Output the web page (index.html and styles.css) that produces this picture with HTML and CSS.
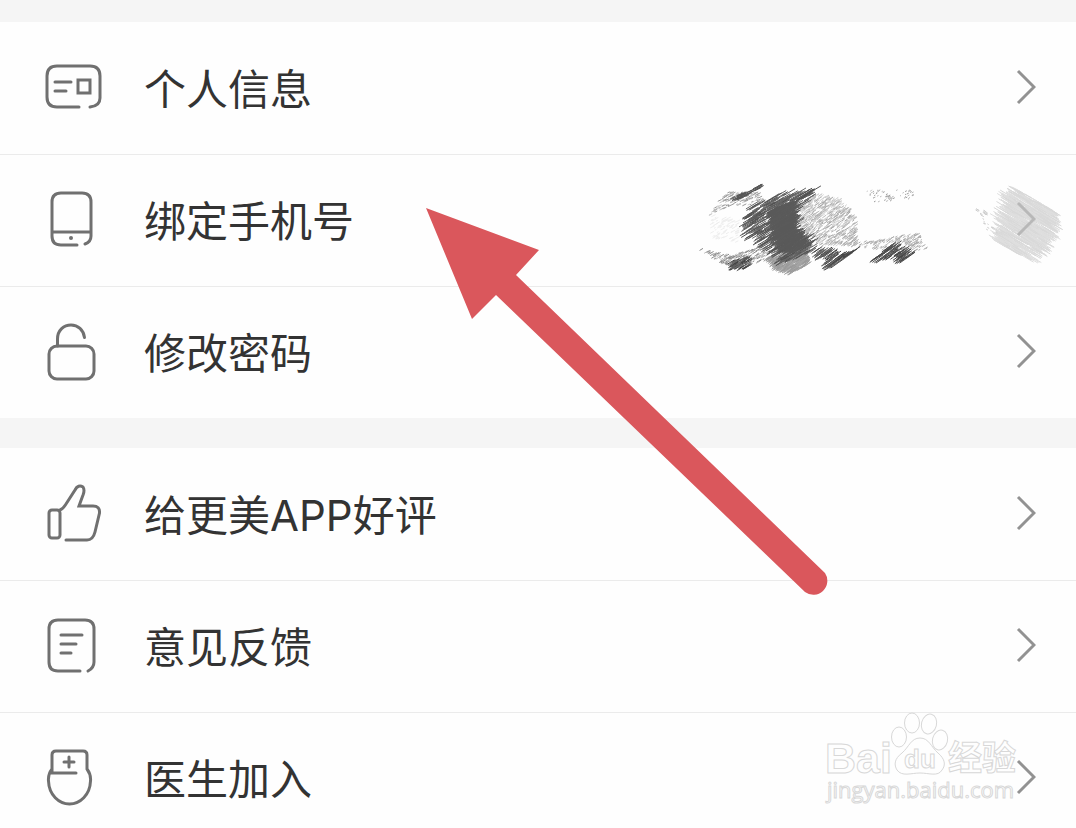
FILE: index.html
```html
<!DOCTYPE html>
<html lang="zh-CN">
<head>
    <meta charset="UTF-8">
    <meta name="viewport" content="width=device-width, initial-scale=1.0">
    <title>设置</title>
    <link rel="stylesheet" href="styles.css">
</head>
<body>
    <main class="settings">
        <nav class="group">
            <a class="row" href="#">
                <svg class="icon" viewBox="0 0 60 60">
                    <path d="M35 50H13Q3 50 3 40V19Q3 9 13 9H46Q56 9 56 19V41Q56 49 46 50M11 25H27M11 34H22"/>
                    <path d="M34 23H46V36H34Z"/>
                </svg>
                <span class="label">个人信息</span>
                <svg class="chevron" viewBox="0 0 20 36"><path d="M2 2L18 18L2 34"/></svg>
            </a>
            <a class="row" href="#">
                <svg class="icon" viewBox="0 0 60 60">
                    <path d="M33 56H17Q8 56 8 47V13Q8 4 17 4H38Q47 4 47 13V47Q47 53 41 55M8 43H47"/>
                    <circle class="dot" cx="27" cy="49" r="2"/>
                </svg>
                <span class="label">绑定手机号</span>
                <canvas class="scribble" id="scribble" width="386" height="116"></canvas>
                <svg class="chevron faded" viewBox="0 0 20 36"><path d="M2 2L18 18L2 34"/></svg>
            </a>
            <a class="row" href="#">
                <svg class="icon" viewBox="0 0 60 60">
                    <rect x="5" y="25" width="45" height="33" rx="8"/>
                    <path d="M13.500 25V18C13.500 9 20 4 27 4C34 4 39.500 9 40.500 16.500"/>
                </svg>
                <span class="label">修改密码</span>
                <svg class="chevron" viewBox="0 0 20 36"><path d="M2 2L18 18L2 34"/></svg>
            </a>
        </nav>
        <nav class="group">
            <a class="row" href="#">
                <svg class="icon" viewBox="0 0 60 60">
                    <rect x="5" y="27" width="11" height="28" rx="3"/>
                    <path d="M16 27C19 26 20 24 22 21L31 7C33 3 36 2 39 4C41 7 40 9 39 12L35 23H49Q56 23 55.500 30L51 49Q49 57 43 57H22"/>
                </svg>
                <span class="label">给更美APP好评</span>
                <svg class="chevron" viewBox="0 0 20 36"><path d="M2 2L18 18L2 34"/></svg>
            </a>
            <a class="row" href="#">
                <svg class="icon" viewBox="0 0 60 60">
                    <path d="M36 56H14Q5 56 5 47V14Q5 5 14 5H41Q50 5 50 14V47Q50 53 44 56M17 20H38M17 29H32M17 38H27"/>
                </svg>
                <span class="label">意见反馈</span>
                <svg class="chevron" viewBox="0 0 20 36"><path d="M2 2L18 18L2 34"/></svg>
            </a>
            <a class="row" href="#">
                <svg class="icon" viewBox="0 0 60 60">
                    <path d="M32 26H8V8Q8 4 12 4H39Q43 4 43 8V22C46 26 47 29 46.500 34C46 48 36 57 25.500 57C15 57 5 48 4.500 34C4 29 5 26 8 22"/>
                    <path d="M25 10V20M20 15H30"/>
                </svg>
                <span class="label">医生加入</span>
                <svg class="watermark" viewBox="0 0 200 100">
                    <text class="wm-bold" x="0" y="60" font-size="43">Bai</text>
                    <path d="M95 25C86 25 84 34 77 40C69 46 69 52 72 57C77 64 86 60 95 60C104 60 113 64 117 57C121 52 120 46 113 40C106 34 104 25 95 25Z"/>
                    <ellipse cx="74" cy="24" rx="7.500" ry="10"/>
                    <ellipse cx="87" cy="10" rx="7.500" ry="10"/>
                    <ellipse cx="104" cy="11" rx="7.500" ry="10" transform="rotate(14 104 11)"/>
                    <ellipse cx="115" cy="27" rx="7.500" ry="10" transform="rotate(14 115 27)"/>
                    <text class="wm-bold" x="79" y="55" font-size="26">du</text>
                    <text class="wm-bold" x="123" y="57" font-size="34">经验</text>
                    <text class="wm-url" x="2" y="85" font-size="22">jingyan.baidu.com</text>
                </svg>
                <svg class="chevron" viewBox="0 0 20 36"><path d="M2 2L18 18L2 34"/></svg>
            </a>
        </nav>
        <svg class="arrow" viewBox="0 0 404 390">
            <path d="M0 0L113 42L90 67L399 365A14 14 0 0 1 379 384L70 87L46 111Z"/>
        </svg>
    </main>
    <script src="script.js"></script>
</body>
</html>
```

FILE: styles.css
```css
body {
    margin: 0;
    background: #f5f5f5;
    font-family: Inter, "Noto Sans CJK SC", sans-serif;
    color: #333;
}

.settings {
    position: relative;
    box-sizing: border-box;
    height: 100vh;
    padding-top: 22px;
    overflow: hidden;
}

.group {
    background: #fefefe;
    margin-bottom: 30px;
}

.row {
    position: relative;
    display: flex;
    align-items: center;
    gap: 40px;
    box-sizing: border-box;
    height: 132px;
    padding: 0 40px 2px 44px;
    color: inherit;
    text-decoration: none;
}

.row + .row {
    border-top: 1px solid #ebebeb;
    padding-bottom: 3px;
}

.icon {
    width: 60px;
    height: 60px;
    fill: none;
    stroke: #707070;
    stroke-width: 3;
    stroke-linecap: round;
}

.icon .dot {
    fill: #707070;
    stroke: none;
}

.label {
    flex: 1;
    padding-top: 5px;
    font-size: 42px;
    line-height: 60px;
}

.chevron {
    position: relative;
    width: 20px;
    height: 36px;
    fill: none;
    stroke: #929292;
    stroke-width: 3;
}

.chevron.faded {
    stroke: #b8b8b8;
}

.scribble {
    position: absolute;
    top: 15px;
    right: 0;
}

.watermark {
    position: absolute;
    top: 0;
    right: 51px;
    width: 200px;
    height: 100px;
    overflow: visible;
    fill: #fefefe;
    stroke: #d8d8d8;
    stroke-width: 1;
}

.wm-bold {
    font-family: "Liberation Sans", "Noto Sans CJK SC", sans-serif;
    font-weight: bold;
}

.wm-url {
    font-family: "Open Sans", sans-serif;
}

.arrow {
    position: absolute;
    top: 208px;
    left: 426px;
    width: 404px;
    height: 390px;
    fill: #da575c;
    pointer-events: none;
}
```

FILE: script.js
```js
const canvas = document.getElementById('scribble');
const ctx = canvas.getContext('2d');

// Fixed seed so the strokes look the same on every load
let seed = 7;
function random() {
    seed = (seed * 16807) % 2147483647;
    return seed / 2147483647;
}

// outline, colours, number of strokes, stroke length, slope
const patches = [
    ['M20 45L35 22L70 22L75 35L45 35Z', ['#c8c8c8', '#999'], 150, 4, -0.5],
    ['M8 78L40 86L75 74L85 85L55 98L35 95Z', ['#bbb', '#888'], 190, 5, -0.6],
    ['M106 36L125 24L150 28L165 45L168 76L130 74L112 60Z', ['#bdbdbd', '#d8d8d8', '#aaa'], 700, 5, -0.7],
    ['M176 20L222 20L226 28L185 34Z', ['#bbb', '#999'], 60, 2, -0.5],
    ['M150 74L190 70L228 62L238 80L190 80Z', ['#bbb', '#aaa'], 200, 4, -0.6],
    ['M22 45L50 50L48 72L22 68Z', ['#eee'], 90, 5, -0.5],
    ['M76 88L116 80L119 94L100 104L86 98Z', ['#999', '#a5a5a5'], 480, 8, -0.7],
    ['M42 28L58 20L72 14L70 18L48 30Z', ['#555'], 45, 9, -0.5],
    ['M55 52L60 36L92 23L124 20L118 32L106 42L108 58L125 72L116 84L92 92L76 76L56 64Z', ['#5b5b5b', '#666', '#505050'], 520, 16, -0.6],
    ['M80 40L104 32L106 60L120 74L100 84L84 70Z', ['#595959'], 700, 12, -0.6],
    ['M40 92L58 87L60 96L50 100L42 98Z', ['#444', '#666'], 70, 9, -0.6],
    ['M120 80L138 78L148 86L166 80L150 92L136 100L138 90Z', ['#444', '#666'], 90, 14, -0.7],
    ['M178 94L195 80L204 72L214 80L226 82L212 92L206 86L190 90Z', ['#444', '#555'], 80, 13, -0.7],
    ['M284 36L298 42L296 52L310 62L300 66L292 50Z', ['#ccc'], 28, 3, 0.6],
    ['M308 52L316 24L328 20L366 42L364 62L344 92L306 72Z', ['#d8d8d8', '#dedede'], 900, 18, 0.6]
];

for (const [outline, colors, count, length, slope] of patches) {
    const shape = new Path2D(outline);
    let drawn = 0;
    while (drawn < count) {
        const x = random() * canvas.width;
        const y = random() * canvas.height;
        if (!ctx.isPointInPath(shape, x, y)) {
            continue;
        }
        const half = length * (0.3 + random() * 0.7) / 2;
        ctx.strokeStyle = colors[Math.floor(random() * colors.length)];
        ctx.beginPath();
        ctx.moveTo(x - half, y - half * slope);
        ctx.lineTo(x + half, y + half * slope);
        ctx.stroke();
        drawn++;
    }
}
```
